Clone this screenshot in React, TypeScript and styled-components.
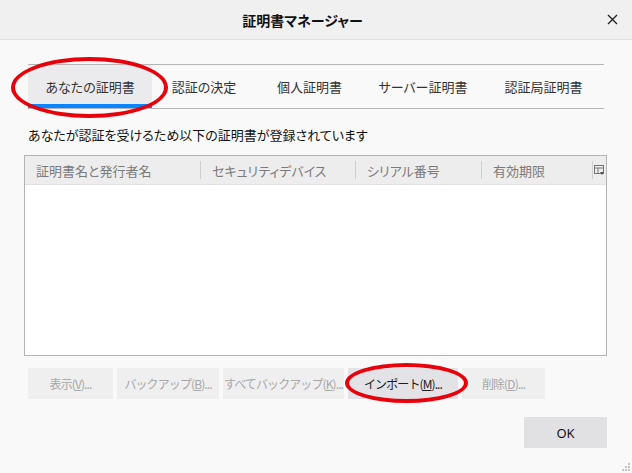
import styled, { createGlobalStyle } from "styled-components";

const GlobalStyle = createGlobalStyle`
  html, body {
    margin: 0;
    padding: 0;
    background: #f9f9fa;
  }
  body {
    font-family: "Noto Sans CJK JP", "Noto Sans", sans-serif;
    font-feature-settings: "palt";
    color: #0c0c0d;
  }
`;

const Window = styled.div`
  position: relative;
  width: 632px;
  height: 473px;
  display: flex;
  flex-direction: column;
  background: #f9f9fa;
  overflow: hidden;
`;

const TitleBar = styled.div`
  height: 39px;
  flex: none;
  display: flex;
  align-items: center;
  background: #f0f0f0;
  border-bottom: 1px solid #dedede;
  padding: 0 13px 0 0;
`;

const Title = styled.div`
  flex: 1;
  text-align: center;
  font-size: 14px;
  font-weight: 700;
  color: #101010;
`;

const CloseButton = styled.button`
  width: 14px;
  height: 14px;
  border: 0;
  padding: 0;
  background: transparent;
  display: flex;
  align-items: center;
  justify-content: center;
`;

const Body = styled.div`
  flex: 1;
  display: flex;
  flex-direction: column;
  padding: 24px 25px 0 24px;
`;

const Tabs = styled.div`
  display: flex;
  margin: 0 3px 0 4px;
  border-top: 1px solid #b5b5b5;
  border-bottom: 1px solid #b5b5b5;
  height: 43px;
`;

const Tab = styled.div<{ $w: number; $active?: boolean }>`
  width: ${(p) => p.$w}px;
  display: flex;
  align-items: center;
  justify-content: center;
  box-sizing: border-box;
  font-size: 13px;
  color: #333;
  background: ${(p) => (p.$active ? "#ebebee" : "transparent")};
  border-bottom: 4px solid ${(p) => (p.$active ? "#0a84ff" : "transparent")};
  padding-top: 4px;
`;

const Description = styled.div`
  margin: 16px 0 0 4px;
  font-size: 13px;
  color: #111;
  height: 20px;
  line-height: 20px;
`;

const Table = styled.div`
  margin-top: 10px;
  height: 199px;
  border: 1px solid #b3b3b3;
  background: #fff;
  display: flex;
  flex-direction: column;
`;

const HeaderRow = styled.div`
  height: 28px;
  display: grid;
  grid-template-columns: 176px 155px 126px 111px 1fr;
  background: #ededed;
  border-bottom: 1px solid #e2e2e2;
`;

const HeaderCell = styled.div<{ $sep?: boolean }>`
  display: flex;
  align-items: center;
  padding-left: 11px;
  font-size: 13px;
  color: #7a7a7a;
  border-right: ${(p) => (p.$sep ? "1px solid #cfcfcf" : "none")};
  margin: 5px 0;
  white-space: nowrap;
  overflow: hidden;
`;

const PickerCell = styled.div`
  display: flex;
  align-items: center;
  justify-content: center;
`;

const ButtonRow = styled.div`
  display: flex;
  gap: 4px;
  margin: 12px 0 0 4px;
`;

const DialogButton = styled.button<{ $w: number; $enabled?: boolean }>`
  width: ${(p) => p.$w}px;
  height: 31px;
  border: 0;
  padding: 0;
  font-family: inherit;
  font-size: 12px;
  letter-spacing: -0.9px;
  white-space: nowrap;
  background: ${(p) => (p.$enabled ? "#e3e3e7" : "#efefef")};
  color: ${(p) => (p.$enabled ? "#1a1a1a" : "#a8a8a8")};
  u {
    text-decoration: underline;
  }
`;

const Footer = styled.div`
  display: flex;
  justify-content: flex-end;
  margin-top: 18px;
`;

const OkButton = styled.button`
  width: 83px;
  height: 31px;
  border: 0;
  background: #e1e1e4;
  font-family: "Noto Sans", sans-serif;
  font-size: 13px;
  color: #111;
`;

const Annotation = styled.div<{ $x: number; $y: number; $w: number; $h: number }>`
  position: absolute;
  left: ${(p) => p.$x}px;
  top: ${(p) => p.$y}px;
  width: ${(p) => p.$w}px;
  height: ${(p) => p.$h}px;
  box-sizing: border-box;
  border: 4px solid #e8000b;
  border-radius: 50%;
  pointer-events: none;
`;

const Grip = styled.svg`
  position: absolute;
  right: 2px;
  bottom: 2px;
`;

const tabs = [
  { label: "あなたの証明書", w: 124, active: true },
  { label: "認証の決定", w: 104 },
  { label: "個人証明書", w: 107 },
  { label: "サーバー証明書", w: 120 },
  { label: "認証局証明書", w: 121 },
];

const columns = ["証明書名と発行者名", "セキュリティデバイス", "シリアル番号", "有効期限"];

const actions = [
  { label: "表示", key: "V", w: 85 },
  { label: "バックアップ", key: "B", w: 102 },
  { label: "すべてバックアップ", key: "K", w: 121 },
  { label: "インポート", key: "M", w: 110, enabled: true },
  { label: "削除", key: "D", w: 83 },
];

export default function App() {
  return (
    <Window>
      <GlobalStyle />
      <TitleBar>
        <Title>証明書マネージャー</Title>
        <CloseButton aria-label="閉じる">
          <svg width="11" height="11" viewBox="0 0 11 11">
            <path d="M1 1L10 10M10 1L1 10" stroke="#222" strokeWidth="1.4" />
          </svg>
        </CloseButton>
      </TitleBar>
      <Body>
        <Tabs>
          {tabs.map((t) => (
            <Tab key={t.label} $w={t.w} $active={t.active}>
              {t.label}
            </Tab>
          ))}
        </Tabs>
        <Description>あなたが認証を受けるため以下の証明書が登録されています</Description>
        <Table>
          <HeaderRow>
            {columns.map((c) => (
              <HeaderCell key={c} $sep>
                {c}
              </HeaderCell>
            ))}
            <PickerCell>
              <svg width="11" height="11" viewBox="0 0 11 11">
                <rect x="0.5" y="0.5" width="9" height="8" fill="none" stroke="#777" />
                <path d="M0.5 3H9.5M4 3V8.5" stroke="#777" />
                <path d="M6 7H10L8 10Z" fill="#555" />
              </svg>
            </PickerCell>
          </HeaderRow>
        </Table>
        <ButtonRow>
          {actions.map((a) => (
            <DialogButton key={a.key} $w={a.w} $enabled={a.enabled}>
              {a.label}(<u>{a.key}</u>)...
            </DialogButton>
          ))}
        </ButtonRow>
        <Footer>
          <OkButton>OK</OkButton>
        </Footer>
      </Body>
      <Annotation $x={11} $y={57} $w={157} $h={61} />
      <Annotation $x={345} $y={363} $w={123} $h={40} />
      <Grip width="8" height="8" viewBox="0 0 8 8">
        <g fill="#c4c4c4">
          <rect x="6" y="0" width="2" height="2" />
          <rect x="3" y="3" width="2" height="2" />
          <rect x="6" y="3" width="2" height="2" />
          <rect x="0" y="6" width="2" height="2" />
          <rect x="3" y="6" width="2" height="2" />
          <rect x="6" y="6" width="2" height="2" />
        </g>
      </Grip>
    </Window>
  );
}
